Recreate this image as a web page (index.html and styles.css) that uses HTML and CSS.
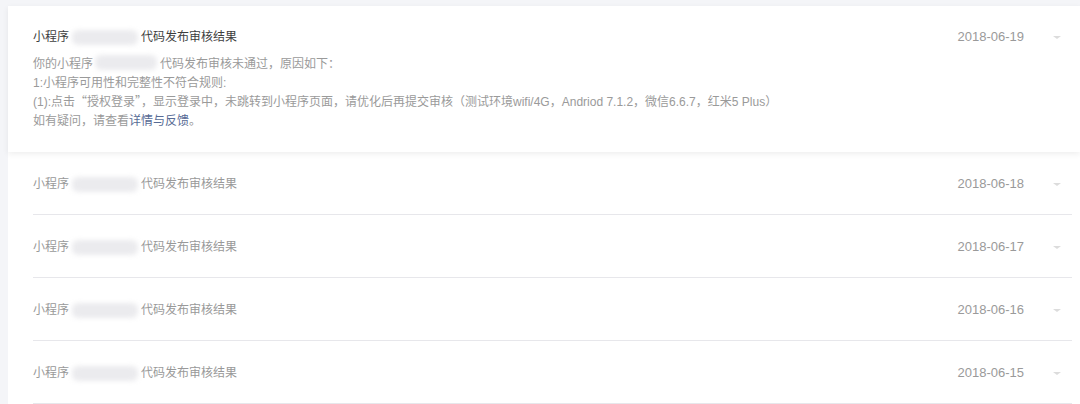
FILE: index.html
```html
<!DOCTYPE html>
<html lang="zh-CN">
<head>
  <meta charset="UTF-8">
  <title>消息通知</title>
  <link rel="stylesheet" href="styles.css">
</head>
<body>

  <div class="msg-list">
    <div class="msg-item open">
      <div class="msg-inner">
        <div class="msg-head">
          <div class="msg-title">小程序<span class="mask mask-title"></span>代码发布审核结果</div>
          <div class="msg-meta"><span class="msg-date">2018-06-19</span><span class="arrow"></span></div>
        </div>
        <div class="msg-detail">
          <p>你的小程序<span class="mask mask-body"></span>代码发布审核未通过，原因如下：</p>
          <p>1:小程序可用性和完整性不符合规则:</p>
          <p>(1):点击<span class="cjk">“授权登录”</span>，显示登录中，未跳转到小程序页面，请优化后再提交审核（测试环境wifi/4G，Andriod 7.1.2，微信6.6.7，红米5 Plus）</p>
          <p>如有疑问，请查看<a href="#">详情与反馈</a>。</p>
        </div>
      </div>
    </div>

    <div class="msg-item">
      <div class="msg-inner">
        <div class="msg-head">
          <div class="msg-title">小程序<span class="mask"></span>代码发布审核结果</div>
          <div class="msg-meta"><span class="msg-date">2018-06-18</span><span class="arrow"></span></div>
        </div>
      </div>
    </div>

    <div class="msg-item">
      <div class="msg-inner">
        <div class="msg-head">
          <div class="msg-title">小程序<span class="mask"></span>代码发布审核结果</div>
          <div class="msg-meta"><span class="msg-date">2018-06-17</span><span class="arrow"></span></div>
        </div>
      </div>
    </div>

    <div class="msg-item">
      <div class="msg-inner">
        <div class="msg-head">
          <div class="msg-title">小程序<span class="mask"></span>代码发布审核结果</div>
          <div class="msg-meta"><span class="msg-date">2018-06-16</span><span class="arrow"></span></div>
        </div>
      </div>
    </div>

    <div class="msg-item">
      <div class="msg-inner">
        <div class="msg-head">
          <div class="msg-title">小程序<span class="mask"></span>代码发布审核结果</div>
          <div class="msg-meta"><span class="msg-date">2018-06-15</span><span class="arrow"></span></div>
        </div>
      </div>
    </div>
  </div>

</body>
</html>
```

FILE: styles.css
```css
html, body { margin: 0; }
body { background: #f4f5f8; padding: 6px 0 0 8px; font-family: "Liberation Sans", "Noto Sans CJK SC", sans-serif; font-size: 12px; color: #999; }
p { margin: 0; height: 19px; }
a { color: #576b95; text-decoration: none; }
.cjk { font-family: "Noto Sans CJK SC", sans-serif; line-height: 1; }

.msg-list { background: #fff; }
.msg-item { padding: 0 8px 0 25px; background: #fff; }
.msg-item.open { position: relative; box-shadow: 0 2px 6px rgba(0, 0, 0, 0.07); }
.msg-inner { padding: 22px 11px 20px 0; border-bottom: 1px solid #e7e7eb; }
.msg-item.open .msg-inner { padding: 21px 11px 21px 0; border-bottom: none; }

.msg-head { display: flex; align-items: center; justify-content: space-between; line-height: 20px; }
.msg-title { display: flex; align-items: center; color: #999; }
.msg-item.open .msg-title { color: #3e3e3e; }
.msg-meta { display: flex; align-items: center; }
.msg-date { font-size: 13px; color: #9a9a9a; }
.arrow { width: 0; height: 0; margin-left: 29px; border-left: 4px solid transparent; border-right: 4px solid transparent; border-top: 3px solid #dcdcdc; }

.msg-detail { margin-top: 8px; line-height: 19px; color: #9a9a9a; }

.mask { display: inline-block; width: 66px; height: 15px; margin: 0 3px; background: #ebebee; border-radius: 6px; filter: blur(2.5px); }
.mask-body { width: 62px; margin: 0 3px 0 2px; vertical-align: -2px; }
```
